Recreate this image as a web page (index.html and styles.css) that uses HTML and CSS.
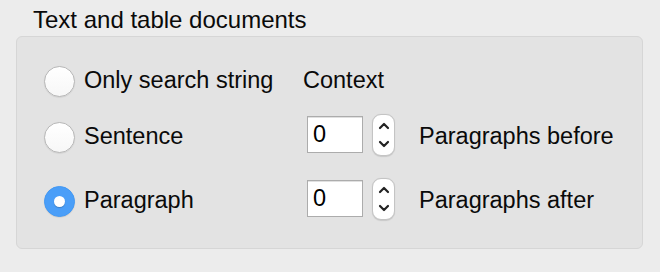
FILE: index.html
```html
<!DOCTYPE html>
<html>
<head>
<meta charset="utf-8">
<link rel="stylesheet" href="styles.css">
</head>
<body>
<div class="title">Text and table documents</div>
<div class="panel">
  <div class="row">
    <div class="opt"><span class="radio"></span><span class="lbl">Only search string</span></div>
    <div class="ctx"><span class="lbl">Context</span></div>
  </div>
  <div class="row row2">
    <div class="opt"><span class="radio"></span><span class="lbl">Sentence</span></div>
    <div class="ctx">
      <div class="field">0</div>
      <div class="stepper">
        <svg width="12" height="8" viewBox="0 0 12 8"><path d="M2 6 L6 2 L10 6" fill="none" stroke="#222" stroke-width="2.2" stroke-linecap="round" stroke-linejoin="round"/></svg>
        <svg width="12" height="8" viewBox="0 0 12 8"><path d="M2 2 L6 6 L10 2" fill="none" stroke="#222" stroke-width="2.2" stroke-linecap="round" stroke-linejoin="round"/></svg>
      </div>
      <span class="lbl desc">Paragraphs before</span>
    </div>
  </div>
  <div class="row row3">
    <div class="opt"><span class="radio on"></span><span class="lbl">Paragraph</span></div>
    <div class="ctx">
      <div class="field">0</div>
      <div class="stepper">
        <svg width="12" height="8" viewBox="0 0 12 8"><path d="M2 6 L6 2 L10 6" fill="none" stroke="#222" stroke-width="2.2" stroke-linecap="round" stroke-linejoin="round"/></svg>
        <svg width="12" height="8" viewBox="0 0 12 8"><path d="M2 2 L6 6 L10 2" fill="none" stroke="#222" stroke-width="2.2" stroke-linecap="round" stroke-linejoin="round"/></svg>
      </div>
      <span class="lbl desc">Paragraphs after</span>
    </div>
  </div>
</div>
</body>
</html>
```
FILE: styles.css
```css
html, body {
  margin: 0;
  padding: 0;
  background: #ececec;
  width: 660px;
  height: 272px;
  overflow: hidden;
  font-family: "Liberation Sans", Arial, sans-serif;
  font-size: 23.5px;
  color: #0a0a0a;
}
.title {
  margin-top: 7px;
  padding-left: 33px;
  line-height: 26px;
  height: 26px;
  font-size: 24px;
}
.panel {
  margin-top: 3px;
  margin-left: 16px;
  width: 627px;
  box-sizing: border-box;
  background: #e3e3e3;
  border: 1px solid #d6d6d6;
  border-radius: 6px;
  padding: 23px 0 28px 27px;
}
.row {
  display: flex;
  align-items: center;
  height: 40px;
}
.row2 { margin-top: 16px; }
.row3 { margin-top: 24px; }
.lbl {
  line-height: 26px;
  white-space: nowrap;
}
.opt {
  width: 259px;
  display: flex;
  align-items: center;
}
.radio {
  width: 31px;
  height: 31px;
  box-sizing: border-box;
  border-radius: 50%;
  background: linear-gradient(#ffffff, #f7f7f7);
  border: 1px solid #b8b8b8;
  box-shadow: 0 0.5px 1px rgba(0,0,0,0.12);
  margin-top: 3px;
  margin-right: 9px;
  flex: none;
  display: flex;
  align-items: center;
  justify-content: center;
}
.radio.on {
  background: #4a9ef8;
  border-color: #4399f5;
}
.radio.on::after {
  content: "";
  width: 11px;
  height: 11px;
  border-radius: 50%;
  background: #fff;
  box-shadow: 0 1px 1px rgba(0,0,0,0.2);
}
.ctx {
  display: flex;
  align-items: center;
}
.field {
  width: 56px;
  height: 37px;
  box-sizing: border-box;
  margin-left: 4px;
  margin-bottom: 4px;
  background: #fff;
  border: 1px solid #acacac;
  box-shadow: inset 0 1px 0 #e0e0e0;
  padding-left: 5px;
  line-height: 35px;
  color: #000;
}
.stepper {
  width: 23px;
  height: 42px;
  box-sizing: border-box;
  margin-left: 9px;
  margin-bottom: 3px;
  background: #fff;
  border: 1px solid #c4c4c4;
  border-radius: 9px;
  box-shadow: 0 0.5px 1px rgba(0,0,0,0.12);
  display: flex;
  flex-direction: column;
  align-items: center;
  justify-content: center;
  gap: 10px;
}
.stepper svg { display: block; }
.desc {
  margin-left: 24px;
}
```
